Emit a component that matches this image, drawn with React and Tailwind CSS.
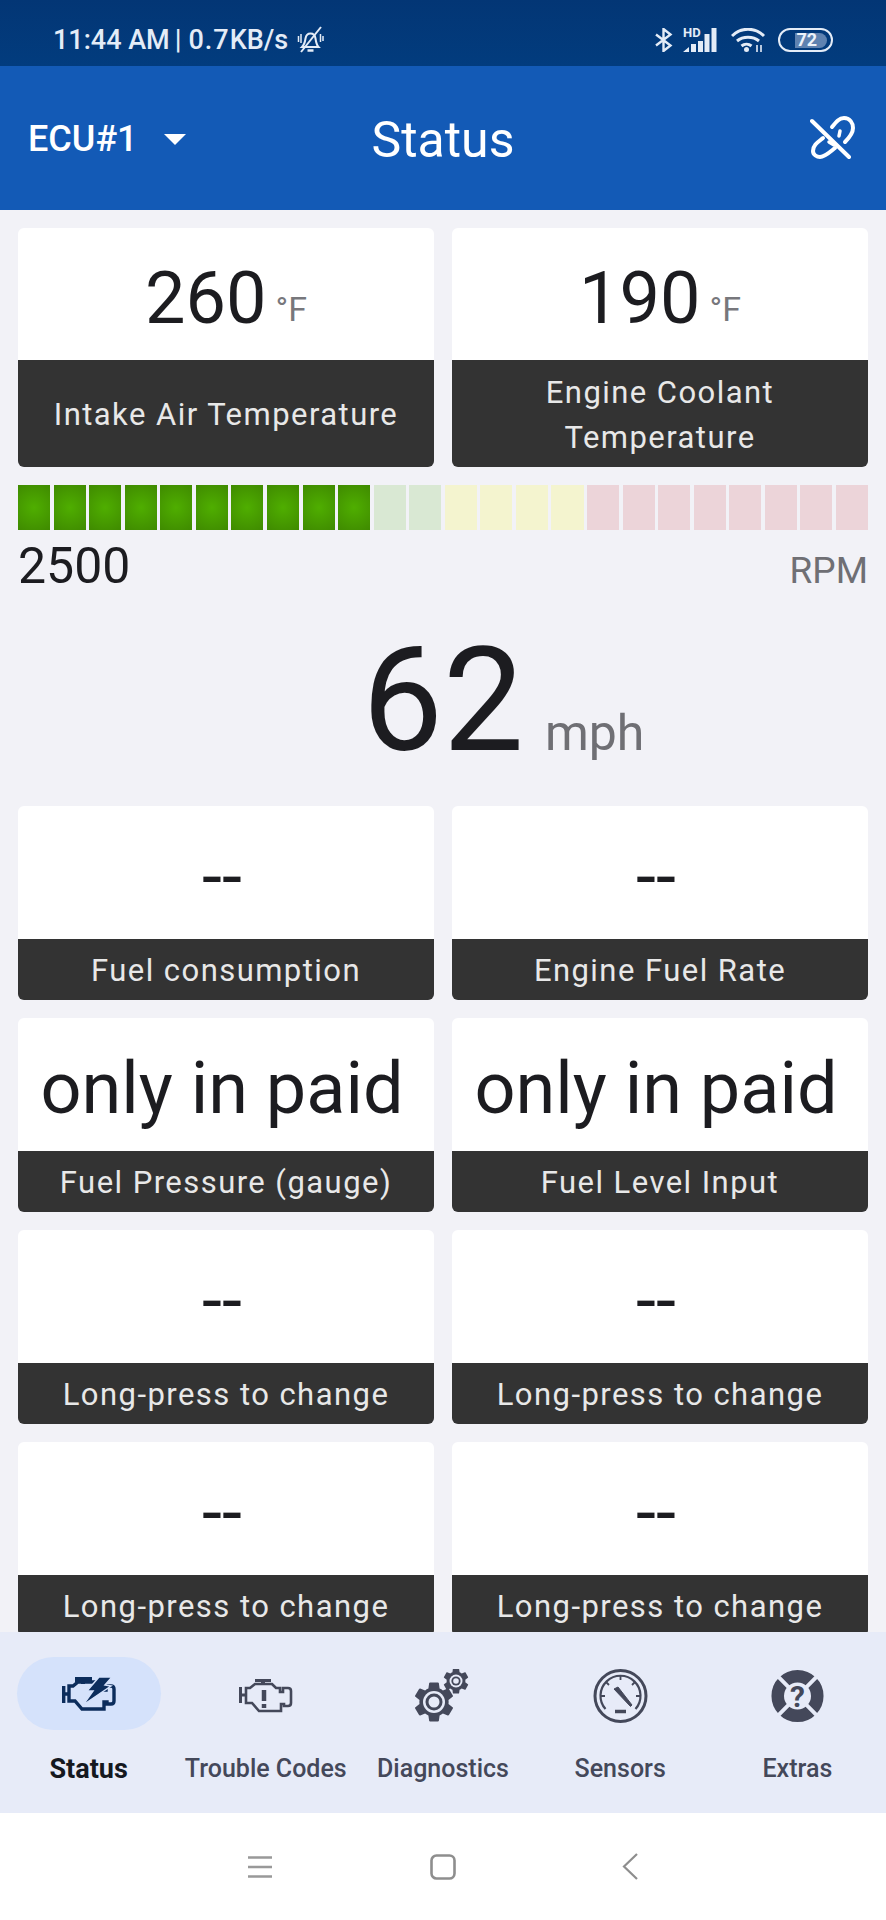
import React from 'react';

const COG = 'M12,15.5A3.5,3.5 0 0,1 8.5,12A3.5,3.5 0 0,1 12,8.5A3.5,3.5 0 0,1 15.5,12A3.5,3.5 0 0,1 12,15.5M19.43,12.97C19.47,12.65 19.5,12.33 19.5,12C19.5,11.67 19.47,11.34 19.43,11L21.54,9.37C21.73,9.22 21.78,8.95 21.66,8.73L19.66,5.27C19.54,5.05 19.27,4.96 19.05,5.05L16.56,6.05C16.04,5.66 15.5,5.32 14.87,5.07L14.5,2.42C14.46,2.18 14.25,2 14,2H10C9.75,2 9.54,2.18 9.5,2.42L9.13,5.07C8.5,5.32 7.96,5.66 7.44,6.05L4.95,5.05C4.73,4.96 4.46,5.05 4.34,5.27L2.34,8.73C2.21,8.95 2.27,9.22 2.46,9.37L4.57,11C4.53,11.34 4.5,11.67 4.5,12C4.5,12.33 4.53,12.65 4.57,12.97L2.46,14.63C2.27,14.78 2.21,15.05 2.34,15.27L4.34,18.73C4.46,18.95 4.73,19.03 4.95,18.95L7.44,17.94C7.96,18.34 8.5,18.68 9.13,18.93L9.5,21.58C9.54,21.82 9.75,22 10,22H14C14.25,22 14.46,21.82 14.5,21.58L14.87,18.93C15.5,18.67 16.04,18.34 16.56,17.94L19.05,18.95C19.27,19.03 19.54,18.95 19.66,18.73L21.66,15.27C21.78,15.05 21.73,14.78 21.54,14.63L19.43,12.97Z';

// outline of the check engine lamp, 54x34 box
const ENGINE = 'M7 9v15h6l7 8h22v-7h3v2h4c2 0 3-1 3-3V12c0-2-1-3-3-3h-5v4h-3V9h-4l-4-4H16l-5 4z';

function BellOff() {
  return (
    <svg width="30" height="30" viewBox="0 0 30 30" fill="none" stroke="#e4ecf7" strokeWidth="2">
      <path d="M7 22c2-2 3-5 3.500-8.500.6-3.500 2.500-5 5-5s4.500 1.500 5 5c.5 3.500 1 6.500 3 8.500z" />
      <path d="M12.500 25.500h6" strokeWidth="2.500" />
      <path d="M6 27 26 2" />
      <path d="M3.500 11v6M6 9v9M25.500 9v8M28 11v5" strokeWidth="1.500" />
    </svg>
  );
}

function StatusIcons() {
  return (
    <div className="flex items-center">
      <svg width="18" height="24" viewBox="0 0 18 24" fill="none" stroke="#e4ecf7" strokeWidth="2.400" className="mr-[10px]">
        <path d="M1 6.500 15.500 17.500 8.500 23V1l7 5.500L1 17.500" />
      </svg>
      <div className="relative w-[34px] h-[24px] mr-[14px]">
        <span className="absolute left-0 top-[-2px] text-[13px] leading-[13px] font-bold text-[#e4ecf7]">HD</span>
        <svg width="34" height="24" viewBox="0 0 34 24" fill="#e4ecf7" className="absolute left-0 top-0">
          <path d="M0 24 6 19v5zM8 24V16h5v8zM15 24V13h5v11zM21.500 24V6h5v18zM28.500 24V0h5v24z" />
        </svg>
      </div>
      <svg width="34" height="24" viewBox="0 0 34 24" fill="none" stroke="#e4ecf7" strokeWidth="3" className="mr-[13px]">
        <path d="M1 8c9-9 23-9 32 0M6 13c6-5 16-5 22 0M10.500 18c3-2.500 7-2.500 10 0" />
        <circle cx="15.500" cy="21.500" r="2.500" fill="#e4ecf7" stroke="none" />
        <path d="M26 17v7M30 17v7" strokeWidth="1.600" />
      </svg>
      <div className="w-[55px] h-[24px] rounded-full border-[2.5px] border-[#e4ecf7] flex items-center">
        <div className="h-[15px] w-[32px] ml-[14.500px] rounded-r-full bg-[#5f82b0] flex items-center">
          <span className="ml-[2px] text-[18px] leading-none font-bold text-[#eef3fa]">72</span>
        </div>
      </div>
    </div>
  );
}

function LinkOff() {
  return (
    <svg width="46" height="46" viewBox="0 0 46 46" fill="none" stroke="#ffffff" strokeWidth="4" strokeLinecap="round">
      <path d="M2 6 39 42" />
      <path d="M22 12C26 7 29 3 34 3c6 0 9 5 9 10 0 4-3 9-8 14" />
      <path d="M13 23C8 27 3 30 3 36c0 4 4 6 7 6 5 0 10-5 15-9" />
      <path d="M30 16l-1 5M19 27l5 3" strokeWidth="3.500" />
    </svg>
  );
}

function TopBars() {
  return (
    <div className="shrink-0">
      <div className="h-[66px] pt-[14px] bg-[linear-gradient(#033675,#023c7e)] flex items-center justify-between pl-[53px] pr-[53px] text-[#e4ecf7] font-medium">
        <div className="flex items-center">
          <span className="text-[27px] leading-none">11:44 AM</span>
          <span className="text-[27px] leading-none ml-[5px]">|</span>
          <span className="text-[27px] leading-none ml-[7px] tracking-[1px]">0.7</span>
          <span className="text-[27px] leading-none">KB/s</span>
          <span className="ml-[7px] flex"><BellOff /></span>
        </div>
        <StatusIcons />
      </div>
      <div className="relative h-[144px] bg-[#135ab6] flex items-center justify-between pl-[28px] pr-[30px] text-white">
        <div className="flex items-center pt-[2px]">
          <span className="text-[36px] font-medium leading-none">ECU#1</span>
          <span className="ml-[26px] w-0 h-0 border-l-[11px] border-r-[11px] border-t-[11px] border-l-transparent border-r-transparent border-t-white" />
        </div>
        <span className="absolute inset-x-0 pt-[4px] text-center text-[50px] leading-none pointer-events-none">Status</span>
        <LinkOff />
      </div>
    </div>
  );
}

function Tile({ value, unit, label, tall }) {
  return (
    <div className="rounded-[6px] overflow-hidden flex flex-col">
      <div className={`${tall ? 'h-[132px]' : 'h-[133px]'} pt-[9px] bg-white flex items-center justify-center text-[#1c1c20] ${unit ? '' : 'pr-[8px]'}`}>
        <span className="text-[72px] leading-none">{value}</span>
        {unit && <span className="ml-[9px] mt-[20px] text-[34px] leading-none text-[#77777c]">{unit}</span>}
      </div>
      <div className={`${tall ? 'h-[107px] leading-[45px]' : 'h-[61px] leading-[40px]'} pt-[2px] bg-[#333333] text-[#e8e8e8] text-[31px] tracking-[1.45px] flex items-center justify-center text-center px-4`}>
        {label}
      </div>
    </div>
  );
}

function RpmBar() {
  const segments = [];
  for (let i = 0; i < 24; i++) {
    let cls = 'bg-[#ecd4d9]';
    if (i < 10) cls = 'bg-[radial-gradient(circle,#4fae00,#3f8a00)]';
    else if (i < 12) cls = 'bg-[#d9e8d3]';
    else if (i < 16) cls = 'bg-[#f4f4cf]';
    segments.push(<div key={i} className={`flex-1 ${cls}`} />);
  }
  return (
    <div>
      <div className="flex gap-[3.5px] h-[45px]">{segments}</div>
      <div className="mt-[11px] flex justify-between items-baseline h-[50px]">
        <span className="text-[50px] leading-[50px] text-[#1c1c20]">2500</span>
        <span className="text-[37px] leading-[50px] text-[#6f6f74]">RPM</span>
      </div>
    </div>
  );
}

function NavIcon({ name }) {
  if (name === 'Status') {
    return (
      <svg width="54" height="34" viewBox="0 0 54 34" fill="none" stroke="#0c2d5c" strokeWidth="3.400">
        <path d={ENGINE} />
        <path d="M1.700 9v17M1.700 17H7" strokeWidth="3.400" />
        <path d="M13 2.500h17" strokeWidth="5" />
        <path d="M21 3v4" strokeWidth="4" />
        <path d="M37 0H50L43 8l6 1-28 19 10-14-6 0z" fill="#0c2d5c" stroke="#d5e2fb" strokeWidth="1.500" />
      </svg>
    );
  }
  if (name === 'Trouble Codes') {
    return (
      <svg width="54" height="34" viewBox="0 0 54 34" fill="none" stroke="#44485a" strokeWidth="2.600">
        <path d={ENGINE} />
        <path d="M1.500 8v16M1.500 16H7" strokeWidth="3" />
        <path d="M16 1.500h16" strokeWidth="3" />
        <path d="M24 2v3" strokeWidth="4" />
        <path d="M25 11v11M25 25v4" strokeWidth="4.500" />
      </svg>
    );
  }
  if (name === 'Diagnostics') {
    return (
      <svg width="55" height="54" viewBox="0 0 55 54" fill="#44485a">
        <g transform="translate(-4.400 9.600) scale(1.950)"><path d={COG} /></g>
        <circle cx="19" cy="33" r="11" fill="#e7ebf8" />
        <circle cx="19" cy="33" r="8.500" />
        <circle cx="19" cy="33" r="5.500" fill="#e7ebf8" />
        <g transform="translate(26 -3) scale(1.250)"><path d={COG} /></g>
        <circle cx="41" cy="12" r="6.500" fill="#e7ebf8" />
        <circle cx="41" cy="12" r="4.600" />
        <circle cx="41" cy="12" r="2.800" fill="#e7ebf8" />
      </svg>
    );
  }
  if (name === 'Sensors') {
    return (
      <svg width="55" height="54" viewBox="0 0 55 54" fill="none" stroke="#44485a">
        <circle cx="27.500" cy="27" r="25.500" strokeWidth="3" />
        <path d="M12.500 40A20 20 0 1 1 42.500 40" strokeWidth="2.200" />
        <path d="M27.500 7v4M13 13l3 3M42 13l-3 3M8 27h4M47 27h-4" strokeWidth="1.800" />
        <path d="M21 20l4-2 14 18-1.500 1.500z" fill="#44485a" strokeWidth="1" />
        <path d="M22 42.500h11" strokeWidth="3.500" />
      </svg>
    );
  }
  return (
    <svg width="55" height="54" viewBox="0 0 56 56" fill="none">
      <circle cx="28" cy="28" r="20.500" stroke="#44485a" strokeWidth="13" />
      <path d="M8 8l12 12M48 8 36 20M8 48l12-12M48 48 36 36" stroke="#e7ebf8" strokeWidth="4" />
      <text x="28" y="39" textAnchor="middle" fontSize="31" fontWeight="700" fontFamily="Roboto, sans-serif" fill="#44485a">?</text>
    </svg>
  );
}

function BottomNav() {
  const items = ['Status', 'Trouble Codes', 'Diagnostics', 'Sensors', 'Extras'];
  return (
    <div className="shrink-0 h-[181px] bg-[#e7ebf8] grid grid-cols-5">
      {items.map((name, i) => (
        <div key={name} className="flex flex-col items-center pt-[25px]">
          <div className={`w-[144px] h-[73px] rounded-full flex items-center justify-center ${i === 0 ? 'bg-[#d5e2fb]' : 'pt-[5px]'}`}>
            <NavIcon name={name} />
          </div>
          <span className={`mt-[24px] leading-[30px] whitespace-nowrap ${i === 0 ? 'text-[27px] font-bold text-[#15181f]' : 'text-[25px] font-medium text-[#44485a]'}`}>{name}</span>
        </div>
      ))}
    </div>
  );
}

function SystemNav() {
  return (
    <div className="shrink-0 h-[107px] bg-white flex items-center justify-center">
      <div className="w-[183px] flex justify-center">
        <svg width="24" height="22" viewBox="0 0 24 22" stroke="#999999" strokeWidth="2.400"><path d="M0 1.500h24M0 11h24M0 20.500h24" /></svg>
      </div>
      <div className="w-[183px] flex justify-center">
        <svg width="26" height="26" viewBox="0 0 26 26" fill="none" stroke="#8e8e8e" strokeWidth="2.600"><rect x="1.500" y="1.500" width="23" height="23" rx="5" /></svg>
      </div>
      <div className="w-[183px] flex justify-center">
        <svg width="16" height="27" viewBox="0 0 16 27" fill="none" stroke="#8e8e8e" strokeWidth="2.200" className="ml-[7px]"><path d="M15 1 2 13.500 15 26" /></svg>
      </div>
    </div>
  );
}

export default function App() {
  return (
    <div className="h-[1920px] w-[886px] overflow-hidden flex flex-col bg-[#f2f2f7] font-['Roboto',sans-serif]">
      <TopBars />
      <div className="flex-1 min-h-0 overflow-hidden px-[18px] pt-[18px]">
        <div className="grid grid-cols-2 gap-[18px]">
          <Tile value="260" unit="°F" label="Intake Air Temperature" tall />
          <Tile value="190" unit="°F" label="Engine Coolant Temperature" tall />
        </div>
        <div className="mt-[18px]"><RpmBar /></div>
        <div className="h-[215px] pt-[38px] grid grid-cols-[1fr_auto_1fr] items-baseline text-[#1c1c20]">
          <span />
          <span className="text-[144px] leading-none">62</span>
          <span className="ml-[21px] text-[50px] leading-none text-[#6f6f74]">mph</span>
        </div>
        <div className="grid grid-cols-2 gap-[18px]">
          <Tile value="--" label="Fuel consumption" />
          <Tile value="--" label="Engine Fuel Rate" />
          <Tile value="only in paid" label="Fuel Pressure (gauge)" />
          <Tile value="only in paid" label="Fuel Level Input" />
          <Tile value="--" label="Long-press to change" />
          <Tile value="--" label="Long-press to change" />
          <Tile value="--" label="Long-press to change" />
          <Tile value="--" label="Long-press to change" />
        </div>
      </div>
      <BottomNav />
      <SystemNav />
    </div>
  );
}
